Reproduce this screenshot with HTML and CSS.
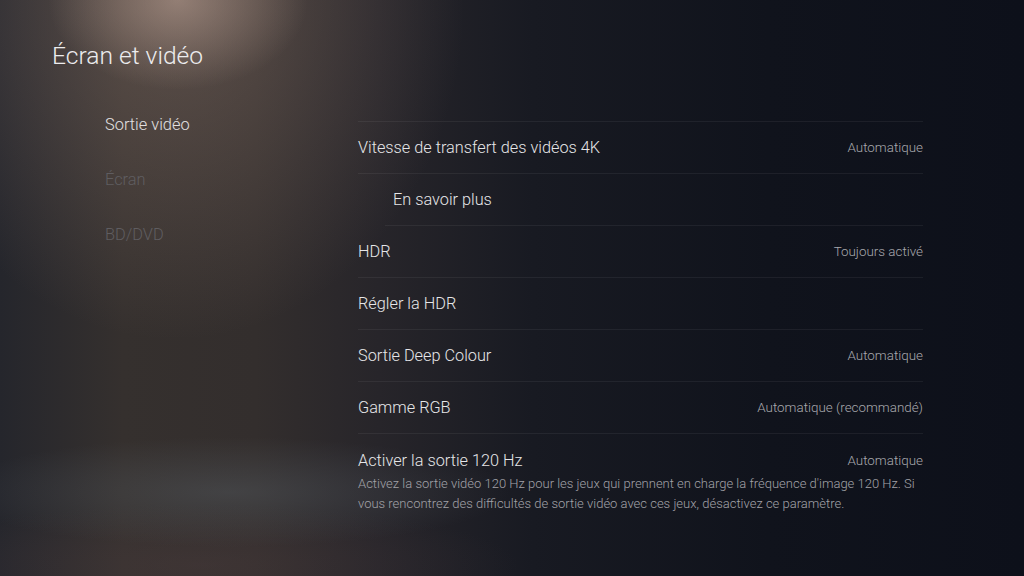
FILE: index.html
```html
<!DOCTYPE html>
<html lang="fr">
<head>
  <meta charset="UTF-8">
  <meta name="viewport" content="width=device-width, initial-scale=1">
  <title>Écran et vidéo</title>
  <link rel="stylesheet" href="styles.css">
</head>
<body>
  <div class="screen">
    <h1 class="title">Écran et vidéo</h1>
    <div class="content">
      <nav class="menu">
        <div class="menu-item active">Sortie vidéo</div>
        <div class="menu-item">Écran</div>
        <div class="menu-item">BD/DVD</div>
      </nav>
      <div class="list">
        <div class="row">
          <span class="row-label">Vitesse de transfert des vidéos 4K</span>
          <span class="row-value">Automatique</span>
        </div>
        <div class="row sub">
          <span class="row-label">En savoir plus</span>
        </div>
        <div class="row">
          <span class="row-label">HDR</span>
          <span class="row-value">Toujours activé</span>
        </div>
        <div class="row">
          <span class="row-label">Régler la HDR</span>
        </div>
        <div class="row">
          <span class="row-label">Sortie Deep Colour</span>
          <span class="row-value">Automatique</span>
        </div>
        <div class="row">
          <span class="row-label">Gamme RGB</span>
          <span class="row-value">Automatique (recommandé)</span>
        </div>
        <div class="row last">
          <div class="row-head">
            <span class="row-label">Activer la sortie 120 Hz</span>
            <span class="row-value">Automatique</span>
          </div>
          <p class="row-desc">Activez la sortie vidéo 120 Hz pour les jeux qui prennent en charge la fréquence d'image 120 Hz. Si vous rencontrez des difficultés de sortie vidéo avec ces jeux, désactivez ce paramètre.</p>
        </div>
      </div>
    </div>
  </div>
</body>
</html>
```
FILE: styles.css
```css
/* base */
* { box-sizing: border-box; margin: 0; padding: 0; }
html, body { height: 100%; }
body {
  font-family: Roboto, "Noto Sans", sans-serif;
  color: #e6e6e8;
  overflow: hidden;
  background:
    radial-gradient(ellipse 130px 90px at 178px 0px, rgba(200,172,158,0.5), transparent),
    radial-gradient(ellipse 290px 340px at 175px 0px, rgba(150,126,114,0.42), transparent),
    radial-gradient(ellipse 280px 55px at 230px 492px, rgba(95,104,112,0.35), transparent),
    radial-gradient(ellipse 320px 60px at 200px 565px, rgba(85,65,68,0.3), transparent),
    linear-gradient(90deg, #25262c 0%, #35302e 12%, #332e2d 25%, #27252a 37%, #181a22 52%, #10131c 75%, #0d101a 100%);
}

.screen {
  height: 576px;
  padding: 40px 0 0 52px;
}

.title {
  font-size: 24.6px;
  font-weight: 300;
  line-height: 32px;
  color: #ececee;
}

/* layout */
.content {
  display: flex;
  align-items: flex-start;
  margin-top: 42px;
}

.menu {
  width: 306px;
  padding-left: 53px;
  display: flex;
  flex-direction: column;
  gap: 33px;
}
.menu-item {
  font-size: 16.4px;
  line-height: 22px;
  color: #5f5d60;
  font-weight: 300;
}
.menu-item.active { color: #e2e0e0; }

/* list */
.list {
  width: 565px;
  margin-top: 7px;
  border-top: 1px solid rgba(255,255,255,0.06);
}
.row {
  height: 52px;
  display: flex;
  align-items: center;
  justify-content: space-between;
  border-bottom: 1px solid rgba(255,255,255,0.06);
}
.row.sub {
  margin-left: 27px;
  padding-left: 8px;
}
.row.last {
  height: auto;
  display: block;
  border-bottom: none;
  padding-top: 16px;
}
.row-head {
  display: flex;
  align-items: center;
  justify-content: space-between;
  height: 22px;
}
.row-label {
  font-size: 16.3px;
  line-height: 22px;
  font-weight: 300;
  color: #e6e6e8;
}
.row-value {
  font-size: 13.4px;
  line-height: 16px;
  font-weight: 300;
  color: #a9a9ae;
}
.row-desc {
  margin-top: 2px;
  font-size: 13px;
  line-height: 20px;
  font-weight: 300;
  color: #a2a2a8;
}
```
